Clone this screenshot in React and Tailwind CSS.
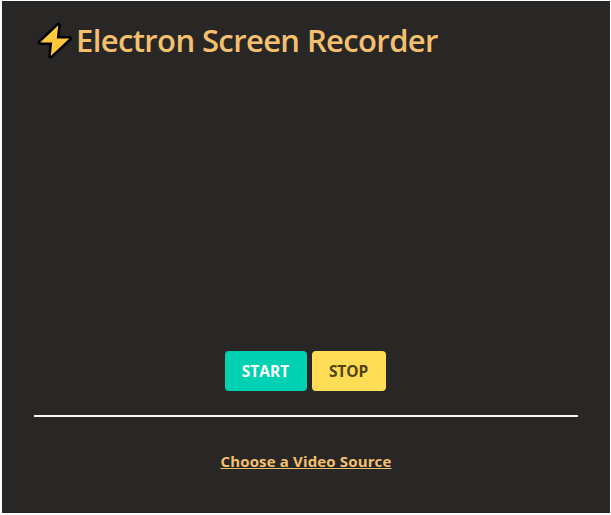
function Bolt() {
  return (
    <svg className="h-[38px] w-[36px] shrink-0" viewBox="0 0 36 38" aria-hidden="true">
      <path
        d="M22.3 3.2 4.2 20.4H16.2L14.7 34 33.4 16.6H20.8Z"
        fill="#ffc83d"
        stroke="#000"
        strokeWidth="5"
        strokeLinejoin="round"
        paintOrder="stroke"
      />
    </svg>
  );
}

export default function App() {
  return (
    <div className="h-[515px] w-[611px] bg-white pt-px pr-px pb-0.5 pl-0.5 font-['Open_Sans','Noto_Sans',sans-serif]">
      <main className="flex h-full flex-col bg-[#282725] px-8 pt-5">
        <h1 className="flex h-10 items-center pl-0.5 text-[31px] leading-10 font-semibold whitespace-nowrap text-[#f4c06f]">
          <Bolt />
          <span className="ml-1 pb-0.5 tracking-[-0.62px]">Electron Screen Recorder</span>
        </h1>
        <div className="mt-[290px] flex justify-center gap-[5px] pr-0.5">
          <button className="h-10 w-[82px] rounded bg-[#00d1b2] pt-0.5 text-[15.5px] font-bold text-white">
            <span className="tracking-[0px]">START</span>
          </button>
          <button className="h-10 w-[74px] rounded bg-[#ffdd57] pt-0.5 text-[15.5px] font-bold text-[#524310]">
            <span className="tracking-[-0.1px]">STOP</span>
          </button>
        </div>
        <hr className="mt-6 h-0.5 border-0 bg-[#f8f5f5]" />
        <div className="mt-8 flex justify-center">
          <button className="h-6 text-[15px] leading-6 font-bold tracking-[0.15px] whitespace-nowrap text-[#f4c06f] underline underline-offset-1">
            Choose a Video Source
          </button>
        </div>
      </main>
    </div>
  );
}
